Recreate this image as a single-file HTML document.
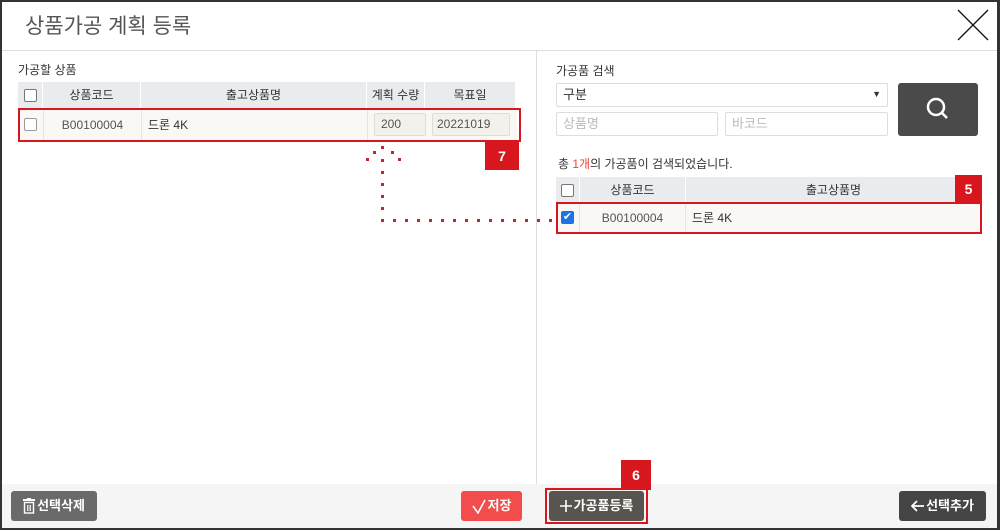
<!DOCTYPE html>
<html><head><meta charset="utf-8"><style>
*{box-sizing:border-box;margin:0;padding:0}
body{width:1000px;height:530px;position:relative;overflow:hidden;background:#333;font-family:"Liberation Sans","Noto Sans CJK KR",sans-serif;color:#333}
.a{position:absolute}
#win{left:2px;top:2px;width:995px;height:526px;background:#fff}
.th{background:#e9ebee;font-size:12px;text-align:center;line-height:26px;color:#333}
.cell{position:absolute;top:0;height:100%;border-right:1px solid #fff}
.cb{position:absolute;width:13px;height:13px;border:1px solid #777;border-radius:2px;background:#fff}
.inp{position:absolute;border:1px solid #ddd;border-radius:2px;background:#fff;font-size:13px;color:#bbb;padding-left:6px;line-height:21px}
.btn{position:absolute;color:#fff;font-size:13px;font-weight:bold;border-radius:3px;line-height:30px;display:flex;align-items:center;justify-content:center;gap:2px}
.badge{position:absolute;background:#d7171d;color:#fff;font-weight:bold;font-size:14px;text-align:center}
.dot{position:absolute;width:3px;height:3px;background:#c8232a}
</style></head><body>
<div id="win" class="a"></div>
<div class="a" style="left:25px;top:10px;font-size:21px;color:#555">상품가공 계획 등록</div>
<svg class="a" style="left:955px;top:7px" width="36" height="36"><path d="M3 3L33 33M33 3L3 33" stroke="#111" stroke-width="1.3"/></svg>
<div class="a" style="left:2px;top:50px;width:995px;height:1px;background:#ddd"></div>
<div class="a" style="left:536px;top:51px;width:1px;height:477px;background:#ddd"></div>
<div class="a" style="left:2px;top:484px;width:995px;height:44px;background:#f5f5f5"></div>

<div class="a" style="left:18px;top:61px;font-size:12px">가공할 상품</div>
<div class="a th" style="left:18px;top:82px;width:497px;height:27px">
<div class="cell" style="left:0;width:25px"><div class="cb" style="left:6px;top:7px"></div></div>
<div class="cell" style="left:25px;width:98px">상품코드</div>
<div class="cell" style="left:123px;width:226px">출고상품명</div>
<div class="cell" style="left:349px;width:58px">계획 수량</div>
<div class="cell" style="left:407px;width:90px;border:0">목표일</div>
</div>
<div class="a" style="left:20px;top:110px;width:497px;height:30px;background:#f9f8f5;font-size:12px">
<div class="cell" style="left:0;width:24px;border-right:1px solid #e5e5e5"><div class="cb" style="left:4px;top:8px;border-color:#999"></div></div>
<div class="cell" style="left:24px;width:98px;text-align:center;line-height:30px;color:#555;border-right:1px solid #e5e5e5">B00100004</div>
<div class="cell" style="left:122px;width:226px;line-height:30px;padding-left:6px;border-right:1px solid #e5e5e5">드론 4K</div>
<div class="inp" style="left:354px;top:3px;width:52px;height:23px;background:#f3f1ec;color:#555;font-size:12px">200</div>
<div class="inp" style="left:412px;top:3px;width:78px;height:23px;background:#f3f1ec;color:#555;font-size:12px;padding-left:4px">20221019</div>
</div>
<div class="a" style="left:18px;top:108px;width:503px;height:34px;border:2px solid #d7171d"></div>
<div class="badge" style="left:485px;top:142px;width:34px;height:28px;line-height:28px">7</div>

<div class="a" style="left:556px;top:62px;font-size:12px">가공품 검색</div>
<div class="inp" style="left:556px;top:83px;width:332px;height:24px;color:#333;font-size:13px">구분<span style="position:absolute;right:6px;font-size:9px">▼</span></div>
<div class="inp" style="left:556px;top:112px;width:162px;height:24px">상품명</div>
<div class="inp" style="left:725px;top:112px;width:163px;height:24px">바코드</div>
<div class="a" style="left:898px;top:83px;width:80px;height:53px;background:#4a4a4a;border-radius:3px"><svg width="80" height="53"><circle cx="38" cy="24" r="8" fill="none" stroke="#fff" stroke-width="2.5"/><path d="M44 30L49 35" stroke="#fff" stroke-width="2.5"/></svg></div>
<div class="a" style="left:558px;top:155px;font-size:12px">총 <span style="color:#e43">1개</span>의 가공품이 검색되었습니다.</div>
<div class="a th" style="left:556px;top:177px;width:425px;height:26px">
<div class="cell" style="left:0;width:24px"><div class="cb" style="left:5px;top:7px"></div></div>
<div class="cell" style="left:24px;width:106px">상품코드</div>
<div class="cell" style="left:130px;width:295px;border:0">출고상품명</div>
</div>
<div class="a" style="left:558px;top:204px;width:421px;height:28px;background:#f9f8f5;font-size:12px">
<div class="cell" style="left:0;width:22px;border-right:1px solid #e5e5e5"><div class="a" style="left:3px;top:7px;width:13px;height:13px;background:#1a73e8;border-radius:2px;color:#fff;font-size:11px;line-height:13px;text-align:center">✔</div></div>
<div class="cell" style="left:22px;width:106px;text-align:center;line-height:28px;color:#555;border-right:1px solid #e5e5e5">B00100004</div>
<div class="cell" style="left:128px;width:293px;line-height:28px;padding-left:6px;border:0">드론 4K</div>
</div>
<div class="a" style="left:556px;top:202px;width:426px;height:32px;border:2px solid #d7171d"></div>
<div class="badge" style="left:955px;top:175px;width:27px;height:28px;line-height:28px">5</div>

<div class="dot" style="left:381px;top:146px"></div><div class="dot" style="left:373px;top:151px"></div><div class="dot" style="left:391px;top:151px"></div><div class="dot" style="left:366px;top:158px"></div><div class="dot" style="left:398px;top:158px"></div>
<div class="dot" style="left:381px;top:159px"></div><div class="dot" style="left:381px;top:171px"></div><div class="dot" style="left:381px;top:183px"></div><div class="dot" style="left:381px;top:195px"></div><div class="dot" style="left:381px;top:207px"></div>
<div class="dot" style="left:381px;top:219px"></div><div class="dot" style="left:393px;top:219px"></div><div class="dot" style="left:405px;top:219px"></div><div class="dot" style="left:417px;top:219px"></div><div class="dot" style="left:429px;top:219px"></div><div class="dot" style="left:441px;top:219px"></div><div class="dot" style="left:453px;top:219px"></div><div class="dot" style="left:465px;top:219px"></div><div class="dot" style="left:477px;top:219px"></div><div class="dot" style="left:489px;top:219px"></div><div class="dot" style="left:501px;top:219px"></div><div class="dot" style="left:513px;top:219px"></div><div class="dot" style="left:525px;top:219px"></div><div class="dot" style="left:537px;top:219px"></div><div class="dot" style="left:549px;top:219px"></div>

<div class="btn" style="left:11px;top:491px;width:86px;height:30px;background:#6a6a6a"><svg width="12" height="16" viewBox="0 0 12 16"><rect x="0" y="1" width="12" height="2" fill="#fff"/><rect x="4" y="0" width="4" height="2" fill="#fff"/><rect x="1.5" y="4.5" width="9" height="10.5" fill="none" stroke="#fff" stroke-width="1.4"/><path d="M4.5 7v6M6 7v6M7.5 7v6" stroke="#fff" stroke-width="0.8"/></svg>선택삭제</div>
<div class="btn" style="left:461px;top:491px;width:61px;height:30px;background:#f24c4c"><svg width="14" height="16"><path d="M1 8L6 15L13 2" fill="none" stroke="#fff" stroke-width="1.6"/></svg>저장</div>
<div class="a" style="left:545px;top:488px;width:103px;height:36px;border:2px solid #d7171d"></div>
<div class="badge" style="left:621px;top:460px;width:30px;height:30px;line-height:30px">6</div>
<div class="btn" style="left:549px;top:491px;width:95px;height:30px;background:#58544f"><svg width="12" height="12"><path d="M6 0V12M0 6H12" stroke="#fff" stroke-width="1.6"/></svg>가공품등록</div>
<div class="btn" style="left:899px;top:491px;width:87px;height:30px;background:#454545"><svg width="13" height="12"><path d="M13 6H2M6 1L1 6L6 11" fill="none" stroke="#fff" stroke-width="1.8"/></svg>선택추가</div>
</body></html>
